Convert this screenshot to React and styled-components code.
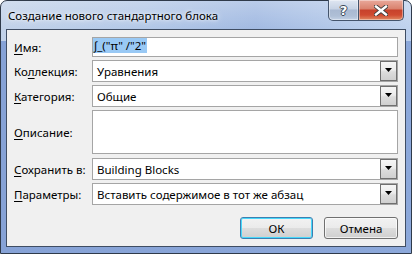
import React from "react";
import styled, { createGlobalStyle } from "styled-components";

const Global = createGlobalStyle`
  html, body { margin: 0; padding: 0; background: #ffffff; }
  body { width: 412px; height: 254px; overflow: hidden; font-family: "Noto Sans", "Segoe UI", sans-serif; }
  * { box-sizing: border-box; }
`;

const Window = styled.div`
  position: relative;
  width: 412px;
  height: 254px;
  border: 1px solid #2f3a4a;
  border-radius: 7px 7px 0 0;
  padding: 27px 5px 6px 5px;
  background:
    linear-gradient(180deg, rgba(255,255,255,0.25) 0px, rgba(255,255,255,0) 28px),
    linear-gradient(90deg, #c2d2e9 0%, #b3c8e7 35%, #a2bae2 62%, #b5caea 85%, #bfd2ee 100%);
  display: flex;
  flex-direction: column;
`;

const BottomBand = styled.div`
  position: absolute;
  left: 0; right: 0; bottom: 0; top: 40px;
  background: linear-gradient(90deg, #86a2d6, #8ca8da);
  z-index: 0;
`;

const TitleBar = styled.div`
  position: absolute;
  left: 0; top: 0; right: 0;
  height: 28px;
  display: flex;
  align-items: center;
  padding-left: 7px;
  z-index: 1;
`;

const Title = styled.span`
  font-size: 11.5px;
  color: #000;
  text-shadow: 0 0 6px rgba(255,255,255,0.9), 0 0 3px rgba(255,255,255,0.8);
`;

const Caption = styled.div`
  position: absolute;
  top: -1px;
  right: 7px;
  display: flex;
  z-index: 2;
`;

const CapBtn = styled.div`
  height: 21px;
  width: ${(p) => p.$w}px;
  border: 1px solid #44546c;
  border-top: none;
  display: flex;
  align-items: center;
  justify-content: center;
  background: ${(p) =>
    p.$close
      ? "linear-gradient(180deg, #e9a99b 0%, #d9816d 45%, #c7422b 50%, #cf4a30 75%, #e08a62 100%)"
      : "linear-gradient(180deg, #dfe6f1 0%, #c6d2e4 45%, #a9b9d2 50%, #afbfd6 80%, #c4d2e6 100%)"};
  border-radius: ${(p) => (p.$close ? "0 0 5px 0" : "0 0 0 5px")};
  box-shadow: inset 0 0 0 1px rgba(255,255,255,0.4);
  & + & { border-left: none; }
`;

const HelpGlyph = styled.span`
  font-family: "DejaVu Sans", sans-serif;
  font-weight: bold;
  font-size: 13px;
  color: #fff;
  line-height: 1;
  text-shadow: 1px 0 0 #3a4656, -1px 0 0 #3a4656, 0 1px 0 #3a4656, 0 -1px 0 #3a4656;
`;

const Client = styled.div`
  position: relative;
  z-index: 1;
  flex: 1;
  margin-top: 1px;
  background: #f0f0f0;
  border: 1px solid #3f4d63;
  padding: 7px;
  display: flex;
  flex-direction: column;
`;

const Form = styled.div`
  display: grid;
  grid-template-columns: 78px 1fr;
  row-gap: 3px;
`;

const Label = styled.label`
  font-size: 11.5px;
  color: #000;
  display: flex;
  align-items: center;
  height: ${(p) => p.$h}px;
  margin-top: ${(p) => p.$mt || 0}px;
  white-space: nowrap;
  & u { text-decoration: underline; text-underline-offset: 2px; }
`;

const Field = styled.div`
  height: ${(p) => p.$h}px;
  margin-top: ${(p) => p.$mt || 0}px;
  background: #fff;
  border: 1px solid #a5a5a5;
  display: flex;
  align-items: center;
  font-size: 11.5px;
  color: #000;
  padding-left: ${(p) => p.$pl ?? 4}px;
  position: relative;
`;

const Selected = styled.span`
  background: #99c9f5;
  padding: 0 1px;
  line-height: 15px;
  white-space: pre;
  margin-top: -3px;
`;

const DropBtn = styled.div`
  position: absolute;
  right: 0;
  top: 0;
  bottom: 0;
  width: 17px;
  border: 1px solid #6f6f6f;
  background: linear-gradient(180deg, #f6f6f6 0%, #ebebeb 45%, #dcdcdc 55%, #cfcfcf 100%);
  display: flex;
  justify-content: center;
  padding-top: 6px;
`;

const Buttons = styled.div`
  display: flex;
  justify-content: flex-end;
  gap: 11px;
  margin-top: 12px;
`;

const Button = styled.div`
  width: ${(p) => p.$w}px;
  height: 22px;
  border: 1px solid ${(p) => (p.$default ? "#3c7fb1" : "#707070")};
  border-radius: 3px;
  background: linear-gradient(180deg, #f2f2f2 0%, #ebebeb 48%, #dddddd 52%, #cfcfcf 100%);
  box-shadow: inset 0 0 0 1px ${(p) => (p.$default ? "#48d8fb" : "rgba(255,255,255,0.7)")};
  display: flex;
  align-items: center;
  justify-content: center;
  font-size: 11.5px;
  color: #000;
`;

const Arrow = () => (
  <svg width="7" height="4" viewBox="0 0 7 4">
    <path d="M0 0 H7 L3.5 4 Z" fill="#000" />
  </svg>
);

const Combo = ({ h, mt, children }) => (
  <Field $h={h} $mt={mt}>
    {children}
    <DropBtn>
      <Arrow />
    </DropBtn>
  </Field>
);

const CloseX = () => (
  <svg width="14" height="11" viewBox="0 0 14 11">
    <path d="M2 1.5 L12 9.5 M12 1.5 L2 9.5" stroke="#3b3b3b" strokeWidth="4.2" strokeLinecap="square" />
    <path d="M2 1.5 L12 9.5 M12 1.5 L2 9.5" stroke="#ffffff" strokeWidth="2.4" strokeLinecap="square" />
  </svg>
);

export default function App() {
  return (
    <>
      <Global />
      <Window>
        <BottomBand />
        <TitleBar>
          <Title>Создание нового стандартного блока</Title>
        </TitleBar>
        <Caption>
          <CapBtn $w={31}>
            <HelpGlyph>?</HelpGlyph>
          </CapBtn>
          <CapBtn $w={45} $close>
            <CloseX />
          </CapBtn>
        </Caption>
        <Client>
          <Form>
            <Label $h={20}><span><u>И</u>мя:</span></Label>
            <Field $h={20} $pl={0}>
              <Selected>{'∫_("π" /"2"'}</Selected>
            </Field>

            <Label $h={22}><span>Ко<u>л</u>лекция:</span></Label>
            <Combo h={22}>Уравнения</Combo>

            <Label $h={22}><span><u>К</u>атегория:</span></Label>
            <Combo h={22}>Общие</Combo>

            <Label $h={44}><span><u>О</u>писание:</span></Label>
            <Field $h={44} />

            <Label $h={22} $mt={1}><span><u>С</u>охранить в:</span></Label>
            <Combo h={22} mt={1}>Building Blocks</Combo>

            <Label $h={22}><span><u>П</u>араметры:</span></Label>
            <Combo h={22}>Вставить содержимое в тот же абзац</Combo>
          </Form>
          <Buttons>
            <Button $w={73} $default>ОК</Button>
            <Button $w={74}>Отмена</Button>
          </Buttons>
        </Client>
      </Window>
    </>
  );
}
